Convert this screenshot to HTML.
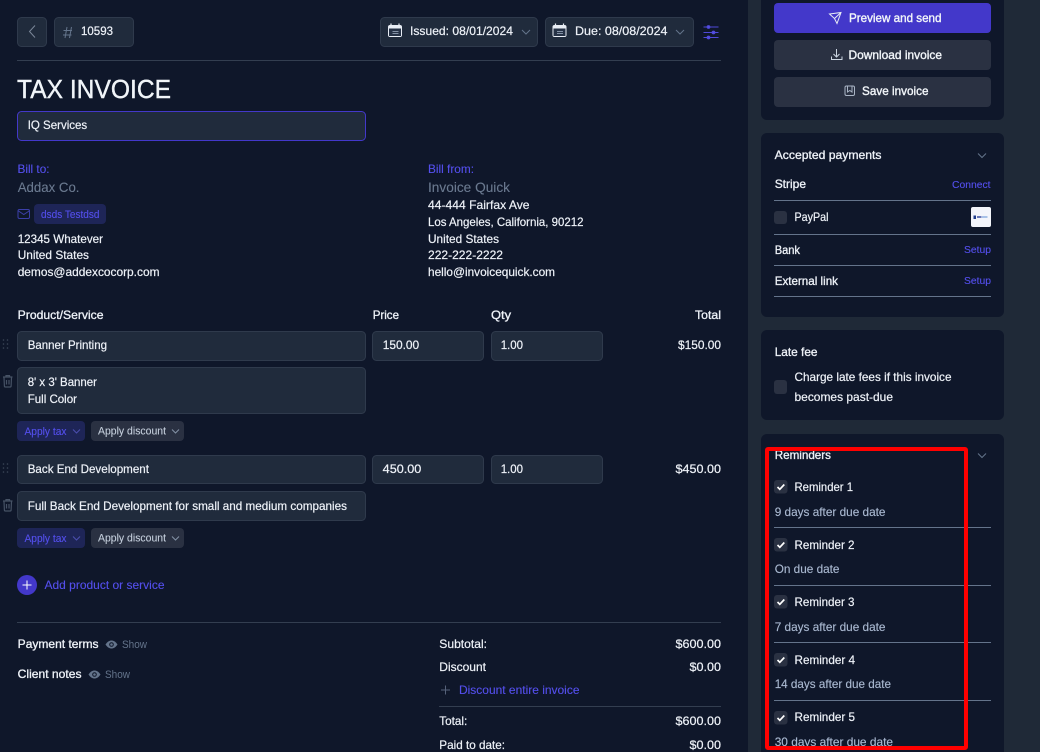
<!DOCTYPE html>
<html lang="en">
<head>
<meta charset="utf-8">
<title>Tax Invoice</title>
<style>
html,body{margin:0;padding:0;background:#0f172a;width:1040px;height:752px;overflow:hidden}
svg{display:block;position:absolute;left:0;top:0}
text{font-family:"Liberation Sans",sans-serif;font-size:12px;fill:#eef2f8;stroke:#eef2f8;stroke-width:.2px;white-space:pre}
.b{fill:#544fec;stroke:#544fec;stroke-width:.12px}
.g{fill:#6b7a90;stroke:#6b7a90;stroke-width:.1px;font-size:14px}
.s{fill:#a9b8d0;stroke:#a9b8d0;stroke-width:.14px}
.a{fill:#c5cfdc;stroke:#c5cfdc;stroke-width:.1px}
.w{fill:#f1f5f9;stroke:#f1f5f9;stroke-width:.38px}
.m{stroke-width:.32px}
.f{fill:#202b3c;stroke:#2f3a4c;stroke-width:1}
.h{stroke:#64748b;stroke-width:1}
.d{stroke:#333e50;stroke-width:1}
.c{fill:#2a3142}
</style>
</head>
<body>
<svg width="1040" height="752" viewBox="0 0 1040 752" xmlns="http://www.w3.org/2000/svg">
<defs>
<g id="chev"><path d="M0 0l4 4 4-4" fill="none" stroke="#64748b" stroke-width="1"/></g>
<g id="chk"><rect width="13.500" height="13.500" rx="3" class="c"/><path d="M3.500 7l2.300 2.300 4.500-4.800" fill="none" stroke="#fff" stroke-width="1.700"/></g>
<g id="cal"><rect x="0" y="1.500" width="14" height="12" rx="2" fill="#e8edf5"/><rect x="1" y="5" width="12" height="7.500" fill="#263246"/><path d="M3 0v3M11 0v3" stroke="#e8edf5" stroke-width="1.200"/><path d="M4.500 8h6M4.500 10h6" stroke="#8492a6" stroke-width="1"/></g>
<g id="eye"><path d="M0 4.500C2 1.500 4 .5 6 .5s4 1 6 4c-2 3-4 4-6 4s-4-1-6-4z" fill="#64748b"/><circle cx="6" cy="4.500" r="2.300" fill="#0f172a"/><circle cx="6" cy="4.500" r="1.300" fill="#64748b"/></g>
<g id="grip" fill="#3c4759"><circle cx="0" cy="0" r=".8"/><circle cx="4" cy="0" r=".8"/><circle cx="0" cy="4" r=".8"/><circle cx="4" cy="4" r=".8"/><circle cx="0" cy="8" r=".8"/><circle cx="4" cy="8" r=".8"/></g>
<g id="trash" fill="none" stroke="#465265" stroke-width="1.200"><path d="M0 2h9.500M3 2V.6h3.500V2"/><path d="M1 2.500l.4 8.500a1 1 0 0 0 1 1h4.700a1 1 0 0 0 1-1l.4-8.500"/><path d="M3.500 5v4.500M6 5v4.500"/></g>
</defs>

<rect x="0" y="0" width="1040" height="752" fill="#0f172a"/>
<rect x="748" y="0" width="292" height="752" fill="#1f2937"/>
<rect x="761" y="-10" width="243" height="130" rx="6" fill="#0f172a"/>
<rect x="761" y="133" width="243" height="184" rx="6" fill="#0f172a"/>
<rect x="761" y="330" width="243" height="90" rx="6" fill="#0f172a"/>
<rect x="761" y="434" width="243" height="340" rx="6" fill="#0f172a"/>

<!-- top bar -->
<rect class="f" x="17.500" y="17.500" width="29" height="29" rx="4"/>
<path d="M35 25.500l-5.500 6 5.500 6" fill="none" stroke="#7b8799" stroke-width="1"/>
<rect class="f" x="54.500" y="17.500" width="79" height="29" rx="4"/>
<path d="M67 27l-2 11M71.500 27l-2 11M63.500 30.500h8.500M63 35h8.500" fill="none" stroke="#64748b" stroke-width="1"/>
<text x="81" y="35" textLength="32" lengthAdjust="spacingAndGlyphs">10593</text>

<rect class="f" x="380.500" y="17.500" width="157" height="29" rx="4"/>
<use href="#cal" x="388" y="23.500"/>
<text x="410" y="35" textLength="103" lengthAdjust="spacingAndGlyphs">Issued: 08/01/2024</text>
<use href="#chev" x="522" y="30"/>
<rect class="f" x="545.500" y="17.500" width="148" height="29" rx="4"/>
<use href="#cal" x="552.500" y="23.500"/>
<text x="575" y="35" textLength="92.500" lengthAdjust="spacingAndGlyphs">Due: 08/08/2024</text>
<use href="#chev" x="676" y="30"/>
<g stroke="#4f49d8" stroke-width="1" fill="#5650e6">
<path d="M703.500 27h15M703.500 32.500h15M703.500 37.500h15" fill="none"/>
<circle cx="708.500" cy="27" r="1.400"/><circle cx="713.500" cy="32.500" r="1.400"/><circle cx="708.500" cy="37.500" r="1.400"/>
</g>
<line class="d" x1="17" y1="60.500" x2="721" y2="60.500"/>

<text x="17" y="98" class="w" style="font-size:26px" textLength="154" lengthAdjust="spacingAndGlyphs">TAX INVOICE</text>
<rect x="17.500" y="111.500" width="348" height="29" rx="4" fill="#202b3c" stroke="#4338ca"/>
<text x="27.700" y="129" textLength="59.500" lengthAdjust="spacingAndGlyphs">IQ Services</text>

<!-- bill to -->
<text x="17.500" y="173" class="b" textLength="32" lengthAdjust="spacingAndGlyphs">Bill to:</text>
<text x="17.700" y="192" class="g" textLength="61.800" lengthAdjust="spacingAndGlyphs">Addax Co.</text>
<rect x="18" y="209.500" width="11.500" height="9" rx="1.500" fill="none" stroke="#3b3fa8"/>
<path d="M18.500 211l5.300 3.500 5.300-3.500" fill="none" stroke="#3b3fa8"/>
<rect x="34" y="204" width="72" height="20" rx="4" fill="#1e2557"/>
<text x="41" y="218" style="font-size:11px" class="b" textLength="58.500" lengthAdjust="spacingAndGlyphs">dsds Testdsd</text>
<text x="17.700" y="243" textLength="85.300" lengthAdjust="spacingAndGlyphs">12345 Whatever</text>
<text x="17.700" y="259" textLength="71.300" lengthAdjust="spacingAndGlyphs">United States</text>
<text x="17.700" y="276" textLength="141.800" lengthAdjust="spacingAndGlyphs">demos@addexcocorp.com</text>

<!-- bill from -->
<text x="428" y="173" class="b" textLength="46" lengthAdjust="spacingAndGlyphs">Bill from:</text>
<text x="428" y="192" class="g" textLength="82" lengthAdjust="spacingAndGlyphs">Invoice Quick</text>
<text x="428" y="209" textLength="101.500" lengthAdjust="spacingAndGlyphs">44-444 Fairfax Ave</text>
<text x="428" y="226" textLength="155.500" lengthAdjust="spacingAndGlyphs">Los Angeles, California, 90212</text>
<text x="428" y="243" textLength="71" lengthAdjust="spacingAndGlyphs">United States</text>
<text x="428" y="259" textLength="75" lengthAdjust="spacingAndGlyphs">222-222-2222</text>
<text x="428" y="276" textLength="127" lengthAdjust="spacingAndGlyphs">hello@invoicequick.com</text>

<!-- table header -->
<text x="17.700" y="319" class="m" textLength="85.800" lengthAdjust="spacingAndGlyphs">Product/Service</text>
<text x="372.700" y="319" class="m" textLength="26.300" lengthAdjust="spacingAndGlyphs">Price</text>
<text x="491" y="319" class="m" textLength="20" lengthAdjust="spacingAndGlyphs">Qty</text>
<text x="695" y="319" class="m" textLength="26" lengthAdjust="spacingAndGlyphs">Total</text>

<!-- row 1 -->
<use href="#grip" x="3.500" y="340"/>
<rect class="f" x="17.500" y="331.500" width="348" height="29" rx="4"/>
<text x="27.700" y="349" textLength="79.300" lengthAdjust="spacingAndGlyphs">Banner Printing</text>
<rect class="f" x="372.500" y="331.500" width="111" height="29" rx="4"/>
<text x="382.700" y="349" textLength="36.500" lengthAdjust="spacingAndGlyphs">150.00</text>
<rect class="f" x="491.500" y="331.500" width="111" height="29" rx="4"/>
<text x="500.700" y="349" textLength="22.300" lengthAdjust="spacingAndGlyphs">1.00</text>
<text x="678" y="349" textLength="43" lengthAdjust="spacingAndGlyphs">$150.00</text>
<use href="#trash" x="3" y="375"/>
<rect class="f" x="17.500" y="367.500" width="348" height="46" rx="4"/>
<text x="27.700" y="386" textLength="69.300" lengthAdjust="spacingAndGlyphs">8' x 3' Banner</text>
<text x="27.700" y="403" textLength="49.300" lengthAdjust="spacingAndGlyphs">Full Color</text>
<rect x="17" y="421" width="68" height="20" rx="4" fill="#1e2557"/>
<text x="24.500" y="435" style="font-size:11px" class="b" textLength="42" lengthAdjust="spacingAndGlyphs">Apply tax</text>
<path d="M73 429.500l3.500 3.500 3.500-3.500" fill="none" stroke="#4c4fb0"/>
<rect x="91" y="421" width="93" height="20" rx="4" fill="#2a3142"/>
<text x="98" y="434.500" style="font-size:11px" class="a" textLength="68" lengthAdjust="spacingAndGlyphs">Apply discount</text>
<path d="M172 429.500l3.500 3.500 3.500-3.500" fill="none" stroke="#8492a6"/>

<!-- row 2 -->
<use href="#grip" x="3.500" y="464"/>
<rect class="f" x="17.500" y="455.500" width="348" height="28" rx="4"/>
<text x="27.700" y="473" textLength="121.300" lengthAdjust="spacingAndGlyphs">Back End Development</text>
<rect class="f" x="372.500" y="455.500" width="111" height="28" rx="4"/>
<text x="382.700" y="473" textLength="38.600" lengthAdjust="spacingAndGlyphs">450.00</text>
<rect class="f" x="491.500" y="455.500" width="111" height="28" rx="4"/>
<text x="500.700" y="473" textLength="22.300" lengthAdjust="spacingAndGlyphs">1.00</text>
<text x="675.500" y="473" textLength="45.500" lengthAdjust="spacingAndGlyphs">$450.00</text>
<use href="#trash" x="3" y="499"/>
<rect class="f" x="17.500" y="491.500" width="348" height="29" rx="4"/>
<text x="27.700" y="510" textLength="319.300" lengthAdjust="spacingAndGlyphs">Full Back End Development for small and medium companies</text>
<rect x="17" y="528" width="68" height="20" rx="4" fill="#1e2557"/>
<text x="24.500" y="542" style="font-size:11px" class="b" textLength="42" lengthAdjust="spacingAndGlyphs">Apply tax</text>
<path d="M73 536.500l3.500 3.500 3.500-3.500" fill="none" stroke="#4c4fb0"/>
<rect x="91" y="528" width="93" height="20" rx="4" fill="#2a3142"/>
<text x="98" y="541.500" style="font-size:11px" class="a" textLength="68" lengthAdjust="spacingAndGlyphs">Apply discount</text>
<path d="M172 536.500l3.500 3.500 3.500-3.500" fill="none" stroke="#8492a6"/>

<!-- add -->
<circle cx="27" cy="585" r="10" fill="#4338ca"/>
<path d="M22.500 585h9M27 580.500v9" stroke="#fff" stroke-width="1"/>
<text x="44.500" y="589" class="b" textLength="120" lengthAdjust="spacingAndGlyphs">Add product or service</text>

<line class="d" x1="17" y1="622.500" x2="721" y2="622.500"/>

<!-- notes -->
<text x="17.700" y="648" class="m" textLength="80.800" lengthAdjust="spacingAndGlyphs">Payment terms</text>
<use href="#eye" x="105.500" y="640"/>
<text x="122" y="648" style="font-size:11px;fill:#64748b;stroke:none" textLength="25" lengthAdjust="spacingAndGlyphs">Show</text>
<text x="17.700" y="678" class="m" textLength="63.800" lengthAdjust="spacingAndGlyphs">Client notes</text>
<use href="#eye" x="88.500" y="670"/>
<text x="105" y="678" style="font-size:11px;fill:#64748b;stroke:none" textLength="25" lengthAdjust="spacingAndGlyphs">Show</text>

<!-- totals -->
<text x="439.300" y="648" textLength="47.700" lengthAdjust="spacingAndGlyphs">Subtotal:</text>
<text x="675.500" y="648" textLength="45.500" lengthAdjust="spacingAndGlyphs">$600.00</text>
<text x="439.300" y="671" textLength="46.700" lengthAdjust="spacingAndGlyphs">Discount</text>
<text x="689.500" y="671" textLength="31.500" lengthAdjust="spacingAndGlyphs">$0.00</text>
<path d="M441 690h9M445.500 685.500v9" stroke="#56627a" stroke-width="1"/>
<text x="459" y="694" class="b" textLength="120.500" lengthAdjust="spacingAndGlyphs">Discount entire invoice</text>
<line class="d" x1="439" y1="706.500" x2="721" y2="706.500"/>
<text x="439.300" y="725" textLength="28" lengthAdjust="spacingAndGlyphs">Total:</text>
<text x="675.500" y="725" textLength="45.500" lengthAdjust="spacingAndGlyphs">$600.00</text>
<text x="439.300" y="749" textLength="65.700" lengthAdjust="spacingAndGlyphs">Paid to date:</text>
<text x="689.500" y="749" textLength="31.500" lengthAdjust="spacingAndGlyphs">$0.00</text>

<!-- action buttons -->
<rect x="774" y="3" width="217" height="30" rx="4" fill="#4338ca"/>
<path d="M829.500 14l11.500-1.500-4 11-2.500-5zM834.500 18.500l6.500-6" fill="none" stroke="#e8edf5" stroke-width="1"/>
<text x="849" y="22" class="w" textLength="92.500" lengthAdjust="spacingAndGlyphs">Preview and send</text>
<rect x="774" y="40" width="217" height="30" rx="4" fill="#2a3142"/>
<path d="M836.500 49v8M833.500 54l3 3 3-3M831.500 56.500v3h10.500v-3" fill="none" stroke="#cbd5e1" stroke-width="1"/>
<text x="848.500" y="59" class="w" textLength="93.500" lengthAdjust="spacingAndGlyphs">Download invoice</text>
<rect x="774" y="77" width="217" height="30" rx="4" fill="#2a3142"/>
<rect x="845" y="86" width="9.500" height="9.500" rx="1.500" fill="none" stroke="#aab5c5"/>
<path d="M847.500 86v6l2.300-1.500 2.200 1.500v-6" fill="none" stroke="#aab5c5"/>
<text x="862" y="95" class="w" textLength="66.500" lengthAdjust="spacingAndGlyphs">Save invoice</text>

<!-- accepted payments -->
<text x="774.700" y="159" class="m" textLength="106.800" lengthAdjust="spacingAndGlyphs">Accepted payments</text>
<use href="#chev" x="978" y="153.500"/>
<text x="774.700" y="188" class="m" textLength="31.300" lengthAdjust="spacingAndGlyphs">Stripe</text>
<text x="952" y="188" class="b" style="font-size:10px" textLength="38.500" lengthAdjust="spacingAndGlyphs">Connect</text>
<line class="h" x1="774" y1="200.500" x2="991" y2="200.500"/>
<rect x="774" y="211" width="13" height="13" rx="3" class="c"/>
<text x="794.500" y="221" textLength="34" lengthAdjust="spacingAndGlyphs">PayPal</text>
<rect x="971" y="207" width="20" height="20" rx="2" fill="#f3f5fb"/>
<rect x="973.500" y="215.500" width="2.500" height="3.500" fill="#1f3d8c"/>
<rect x="977" y="216" width="4.500" height="2" fill="#6878b8"/>
<rect x="982" y="216" width="5.500" height="2" fill="#a8c2e8"/>
<line class="h" x1="774" y1="234.500" x2="991" y2="234.500"/>
<text x="774.700" y="254" class="m" textLength="25.300" lengthAdjust="spacingAndGlyphs">Bank</text>
<text x="964" y="253" class="b" style="font-size:10px" textLength="27" lengthAdjust="spacingAndGlyphs">Setup</text>
<line class="h" x1="774" y1="265.500" x2="991" y2="265.500"/>
<text x="774.700" y="285" class="m" textLength="63.300" lengthAdjust="spacingAndGlyphs">External link</text>
<text x="964" y="284" class="b" style="font-size:10px" textLength="27" lengthAdjust="spacingAndGlyphs">Setup</text>
<line class="h" x1="774" y1="296.500" x2="991" y2="296.500"/>

<!-- late fee -->
<text x="774.700" y="356" class="m" textLength="42.800" lengthAdjust="spacingAndGlyphs">Late fee</text>
<rect x="774" y="380" width="13" height="14" rx="3" class="c"/>
<text x="794.500" y="381" textLength="157" lengthAdjust="spacingAndGlyphs">Charge late fees if this invoice</text>
<text x="794.500" y="401" textLength="98.500" lengthAdjust="spacingAndGlyphs">becomes past-due</text>

<!-- reminders -->
<text x="774.700" y="459" class="m" textLength="56.300" lengthAdjust="spacingAndGlyphs">Reminders</text>
<use href="#chev" x="978" y="453.500"/>

<use href="#chk" x="774" y="480"/>
<text x="794.500" y="491" textLength="58.500" lengthAdjust="spacingAndGlyphs">Reminder 1</text>
<text x="774.700" y="516" class="s" textLength="110.800" lengthAdjust="spacingAndGlyphs">9 days after due date</text>
<line class="h" x1="774" y1="527.500" x2="991" y2="527.500"/>

<use href="#chk" x="774" y="538"/>
<text x="794.500" y="549" textLength="60" lengthAdjust="spacingAndGlyphs">Reminder 2</text>
<text x="774.700" y="573" class="s" textLength="64.800" lengthAdjust="spacingAndGlyphs">On due date</text>
<line class="h" x1="774" y1="585.500" x2="991" y2="585.500"/>

<use href="#chk" x="774" y="595"/>
<text x="794.500" y="606" textLength="60" lengthAdjust="spacingAndGlyphs">Reminder 3</text>
<text x="774.700" y="631" class="s" textLength="110.800" lengthAdjust="spacingAndGlyphs">7 days after due date</text>
<line class="h" x1="774" y1="642.500" x2="991" y2="642.500"/>

<use href="#chk" x="774" y="653"/>
<text x="794.500" y="664" textLength="60.500" lengthAdjust="spacingAndGlyphs">Reminder 4</text>
<text x="774.700" y="688" class="s" textLength="116.300" lengthAdjust="spacingAndGlyphs">14 days after due date</text>
<line class="h" x1="774" y1="700.500" x2="991" y2="700.500"/>

<use href="#chk" x="774" y="711"/>
<text x="794.500" y="721" textLength="60.500" lengthAdjust="spacingAndGlyphs">Reminder 5</text>
<text x="774.700" y="746" class="s" textLength="118.300" lengthAdjust="spacingAndGlyphs">30 days after due date</text>

<rect x="767" y="449" width="199" height="299" rx="1" fill="none" stroke="#ff0000" stroke-width="4"/>
</svg>
</body>
</html>
